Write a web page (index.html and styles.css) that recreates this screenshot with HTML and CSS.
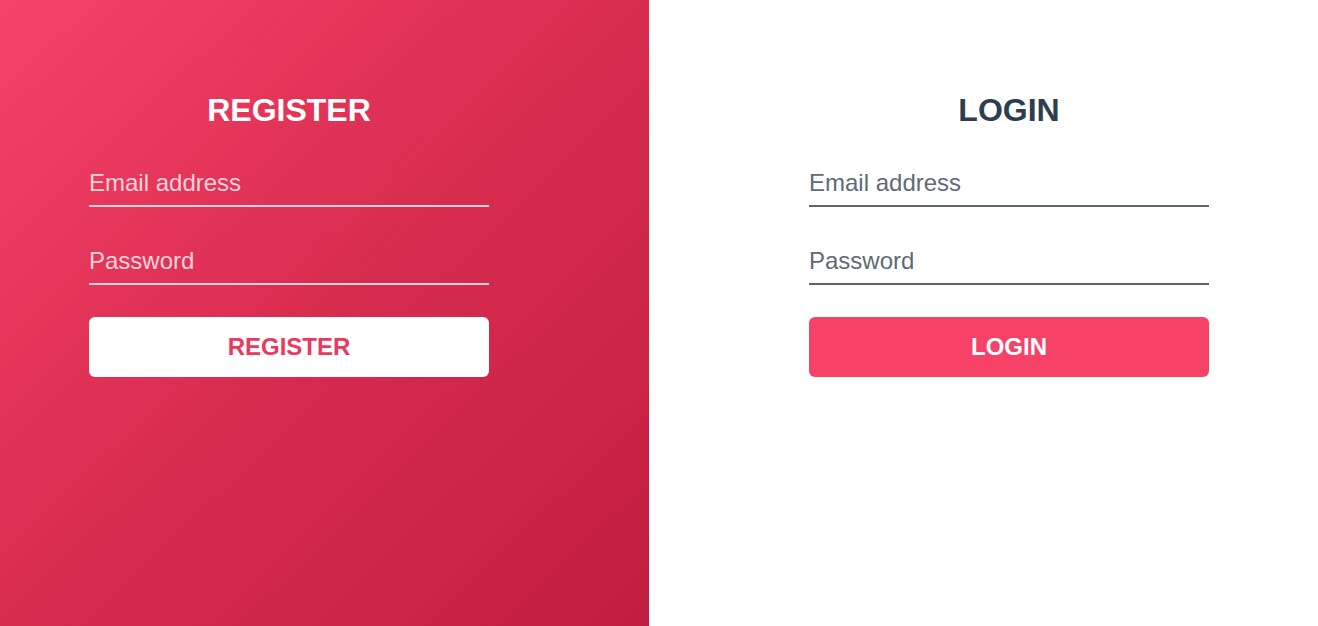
FILE: index.html
```html
<!DOCTYPE html>
<html lang="en">
<head>
<meta charset="utf-8">
<title>Register / Login</title>
<link rel="stylesheet" href="styles.css">
</head>
<body>
  <section class="panel panel-register">
    <form class="form form-register">
      <h2 class="form-title">REGISTER</h2>
      <input class="field" type="email" placeholder="Email address">
      <input class="field" type="password" placeholder="Password">
      <button class="btn btn-register" type="button">REGISTER</button>
    </form>
  </section>
  <section class="panel panel-login">
    <form class="form form-login">
      <h2 class="form-title">LOGIN</h2>
      <input class="field" type="email" placeholder="Email address">
      <input class="field" type="password" placeholder="Password">
      <button class="btn btn-login" type="button">LOGIN</button>
    </form>
  </section>
</body>
</html>
```
FILE: styles.css
```css
* { box-sizing: border-box; }
html, body { height: 100%; }
body {
  margin: 0;
  display: flex;
  font-family: "Liberation Sans", Arial, sans-serif;
  background: #ffffff;
  overflow: hidden;
}
.panel {
  height: 626px;
  padding-top: 92px;
}
.panel-register {
  width: 649px;
  flex: 0 0 649px;
  padding-left: 89px;
  background: linear-gradient(to bottom right, #f54268 0%, #d82c4f 50%, #c01e40 100%);
}
.panel-login {
  flex: 1;
  padding-left: 160px;
  background: #ffffff;
}
.form {
  width: 400px;
  display: flex;
  flex-direction: column;
  gap: 32px;
}
.form-title {
  margin: 0 0 1px;
  height: 36px;
  line-height: 36px;
  font-size: 32px;
  font-weight: 700;
  text-align: center;
}
.form-register .form-title { color: #ffffff; }
.form-login .form-title { color: #2c3e50; }
.field {
  display: block;
  width: 100%;
  height: 46px;
  padding: 0;
  margin: 0;
  border: 0;
  border-bottom: 2px solid;
  background: transparent;
  font-family: "Liberation Sans", Arial, sans-serif;
  font-size: 24px;
  outline: none;
}
.form-register .field { border-bottom-color: #f9d3db; color: #ffffff; }
.form-register .field::placeholder { color: #fdd3dc; opacity: 1; }
.form-login .field { border-bottom-color: #5d6670; color: #2c3e50; }
.form-login .field::placeholder { color: #5f6b76; opacity: 1; }
.btn {
  display: block;
  width: 100%;
  height: 60px;
  border: 0;
  border-radius: 6px;
  font-family: "Liberation Sans", Arial, sans-serif;
  font-size: 24px;
  font-weight: 700;
  cursor: pointer;
}
.btn-register { background: #ffffff; color: #e83a5e; }
.btn-login { background: #f64266; color: #ffffff; }
```
